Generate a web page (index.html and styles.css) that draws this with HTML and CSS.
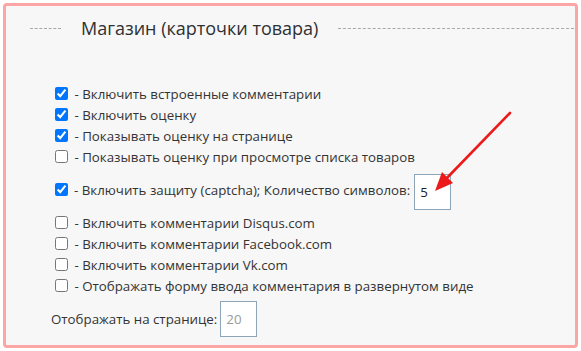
FILE: index.html
```html
<!DOCTYPE html>
<html lang="ru">
<head>
  <meta charset="UTF-8">
  <title>Магазин (карточки товара)</title>
  <link rel="stylesheet" href="styles.css">
</head>
<body>
  <div class="frame">
    <div class="legend"><span>Магазин (карточки товара)</span></div>
    <div class="options">
      <label class="opt"><input type="checkbox" checked> - Включить встроенные комментарии</label>
      <label class="opt"><input type="checkbox" checked> - Включить оценку</label>
      <label class="opt"><input type="checkbox" checked> - Показывать оценку на странице</label>
      <label class="opt"><input type="checkbox"> - Показывать оценку при просмотре списка товаров</label>
      <div class="opt captcha">
        <input type="checkbox" checked>
        <span>- Включить защиту (captcha); Количество символов:</span>
        <input class="field" type="text" value="5">
      </div>
      <label class="opt"><input type="checkbox"> - Включить комментарии Disqus.com</label>
      <label class="opt"><input type="checkbox"> - Включить комментарии Facebook.com</label>
      <label class="opt"><input type="checkbox"> - Включить комментарии Vk.com</label>
      <label class="opt"><input type="checkbox"> - Отображать форму ввода комментария в развернутом виде</label>
    </div>
    <div class="perpage">
      <span>Отображать на странице:</span>
      <input class="field muted" type="text" value="20">
    </div>
  </div>
  <svg class="arrow" width="581" height="351" viewBox="0 0 581 351">
    <line x1="510" y1="113" x2="444" y2="181" stroke="#ec1a1a" stroke-width="2.6" stroke-linecap="round"/>
    <polygon points="435,191 442,172 453,183" fill="#ec1a1a"/>
  </svg>
</body>
</html>
```

FILE: styles.css
```css
html,body{margin: 0;background: #fff;}
body{
  position: relative;
  width: 581px;
  height: 351px;
  font-family: 'Open Sans', 'Liberation Sans', sans-serif;
  color: #333;
}
.frame{
  margin: 3px;
  height: 339px;
  border: 3px solid #fba5a5;
  border-radius: 4px;
  background: #f7f7f7;
}
.legend{
  display: flex;
  align-items: center;
  margin: 10px 0 0 24px;
  height: 24px;
  font-size: 18px;
  color: #2f3033;
}
.legend::before,
.legend::after{
  content: '';
  border-top: 1px dashed #a8a8a8;
}
.legend::before{ width: 31px; }
.legend::after{ flex: 1; margin-right: 1px; }
.legend span{ padding: 0 20px; }
.options{
  display: flex;
  flex-direction: column;
  padding: 43px 0 0 49px;
  font-size: 13.3px;
}
.opt{
  display: flex;
  align-items: center;
  height: 21px;
  white-space: pre;
}
.opt input[type=checkbox]{
  width: 13px;
  height: 13px;
  margin: 0 3px 0 0;
}
.captcha{
  height: 45px;
}
.captcha span{ margin: 0 4px 0 3px; }
.field{
  box-sizing: border-box;
  width: 37px;
  height: 36px;
  margin-top: 4px;
  padding: 0 5px;
  border: 1px solid #8ea4b7;
  background: #fff;
  font: 13.3px 'Open Sans', sans-serif;
  color: #222;
}
.muted{ color: #9a9a9a; }
.perpage{
  display: flex;
  align-items: center;
  margin: 5px 0 0 45px;
  font-size: 13.3px;
}
.perpage span{ margin-right: 3px; }
.perpage .field{ margin-top: 0; }
.arrow{
  position: absolute;
  left: 0;
  top: 0;
  pointer-events: none;
}
```
